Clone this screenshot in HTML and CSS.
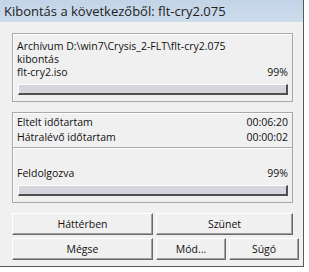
FILE: index.html
```
<!DOCTYPE html>
<html lang="hu">
<head>
    <meta charset="UTF-8">
    <title>Kibontás</title>
    <link rel="stylesheet" href="styles.css">
</head>
<body>
    <div class="window">
        <div class="titlebar">Kibontás a következőből: flt-cry2.075</div>
        <div class="content">
            <div class="panel">
                <div class="line">Archívum D:\win7\Crysis_2-FLT\flt-cry2.075</div>
                <div class="line">kibontás</div>
                <div class="line row"><span>flt-cry2.iso</span><span>99%</span></div>
                <div class="bar"></div>
            </div>

            <div class="panel times">
                <div class="line row"><span>Eltelt időtartam</span><span>00:06:20</span></div>
                <div class="line row"><span>Hátralévő időtartam</span><span>00:00:02</span></div>
            </div>
            <div class="panel total">
                <div class="line row"><span>Feldolgozva</span><span>99%</span></div>
                <div class="bar"></div>
            </div>

            <div class="buttons">
                <div class="btn-row">
                    <button class="btn">Háttérben</button>
                    <button class="btn">Szünet</button>
                </div>
                <div class="btn-row">
                    <button class="btn">Mégse</button>
                    <button class="btn small">Mód...</button>
                    <button class="btn small">Súgó</button>
                </div>
            </div>
        </div>
    </div>
</body>
</html>
```

FILE: styles.css
```
body {
    margin: 0;
    background-color: #ffffff;
    font-family: "Open Sans", "DejaVu Sans", sans-serif;
    font-size: 10.5px;
    color: #111111;
}
.window {
    width: 304px;
    height: 267px;
    background-color: #f0f0f0;
    border-right: 1px solid #5a5a5a;
    border-bottom: 1px solid #5a5a5a;
    box-sizing: border-box;
}
.titlebar {
    height: 22px;
    line-height: 22px;
    padding-left: 4px;
    font-size: 13px;
    color: #222222;
    background: linear-gradient(#c2d4e7, #cddcec);
}
.content {
    padding: 11px 10px 0 12px;
}
.panel {
    border: 1px solid #a9a9a9;
    box-shadow: inset 1px 1px 0 #ffffff;
    padding: 6px 4px 6px 4px;
}
.panel + .panel {
    margin-top: 10px;
}
.panel.total {
    margin-top: 0;
    border-top: none;
    padding-top: 19px;
}
.panel.times {
    padding-top: 2px;
    padding-bottom: 2px;
}
.line {
    height: 13px;
    line-height: 13px;
    white-space: nowrap;
}
.times .line {
    height: 15px;
    line-height: 15px;
}
.row {
    display: flex;
    justify-content: space-between;
}
.bar {
    height: 11px;
    margin: 5px 0 0 1px;
    background-color: #d6d5dd;
    border-top: 1px solid #ffffff;
    border-left: 1px solid #ffffff;
    border-right: 2px solid #505050;
    border-bottom: 2px solid #505050;
    box-sizing: border-box;
}
.buttons {
    margin-top: 10px;
    display: flex;
    flex-direction: column;
    gap: 3px;
}
.btn-row {
    display: flex;
    gap: 3px;
}
.btn {
    flex: 1;
    height: 22px;
    padding: 0;
    font-family: "Open Sans", "DejaVu Sans", sans-serif;
    font-size: 10.5px;
    color: #111111;
    background-color: #f0f0f0;
    border-top: 1px solid #ffffff;
    border-left: 1px solid #ffffff;
    border-right: 1px solid #696969;
    border-bottom: 1px solid #696969;
    box-shadow: inset -1px -1px 0 #a0a0a0;
}
.btn.small {
    flex: 0 0 70px;
}
.btn-row .btn:first-child {
    flex: 0 0 141px;
}
```
